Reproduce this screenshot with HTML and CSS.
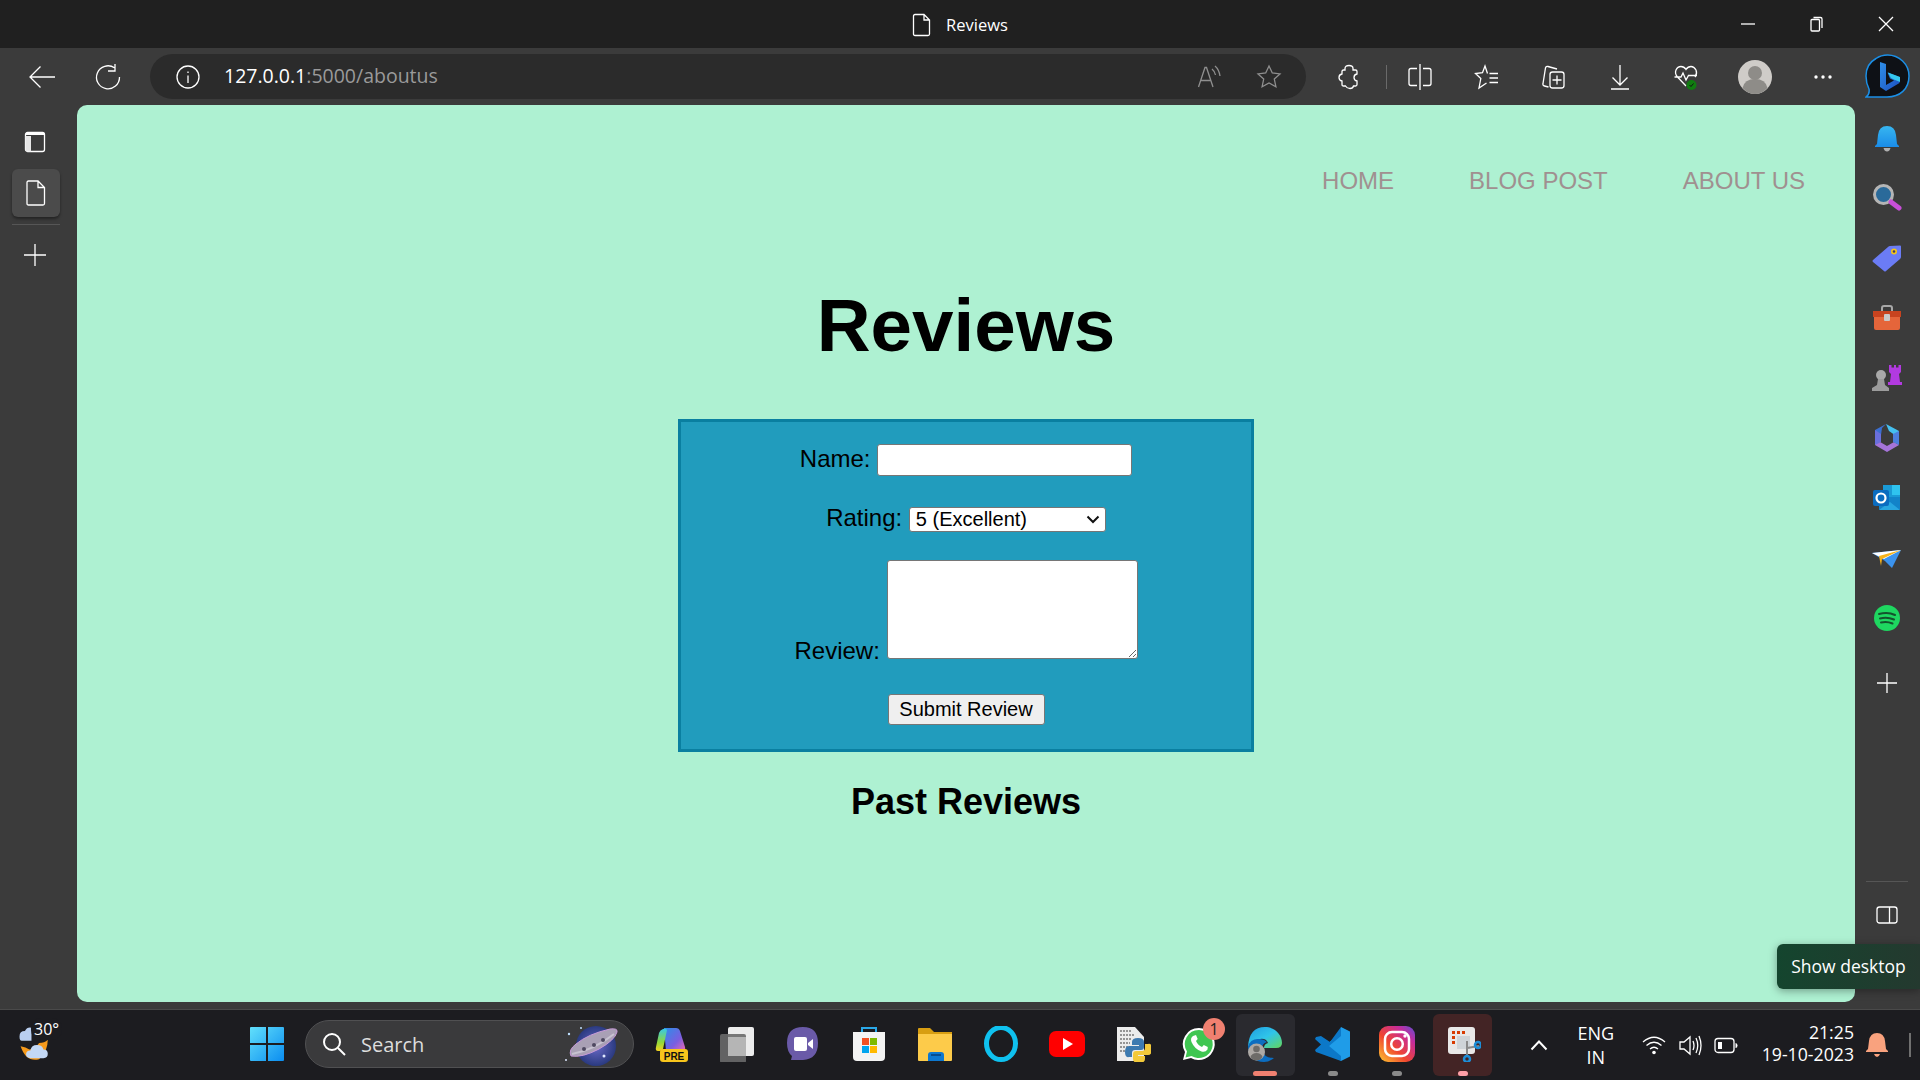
FILE: index.html
```html
<!DOCTYPE html>
<html>
  <head>
    <meta charset="utf-8">
    <title>Reviews</title>
    <link rel="stylesheet" href="styles.css">
  </head>
  <body>
    <div class="titlebar">
      <div class="tabtitle">
        <svg class="ico20" viewBox="0 0 20 24"><path class="ln" d="M3 1.500h9l5.500 5.500v14q0 1.500-1.500 1.500H3q-1.500 0-1.500-1.500v-18Q1.500 1.500 3 1.500zM12 1.500v5.500h5.500"/></svg>
        <span>Reviews</span>
      </div>
      <div class="winbtns">
        <svg class="winbtn" viewBox="0 0 16 16"><path class="ln" d="M1 8h14"/></svg>
        <svg class="winbtn" viewBox="0 0 16 16"><path class="ln" d="M2 4.500q0-1 1-1h6.500q1 0 1 1v9.500q0 1-1 1H3q-1 0-1-1zM4.500 1.500h7q1.500 0 1.500 1.500v9"/></svg>
        <svg class="winbtn" viewBox="0 0 16 16"><path class="ln" d="M1 1l14 14M15 1L1 15"/></svg>
      </div>
    </div>

    <div class="toolbar">
      <div class="tool"><svg class="ico28" viewBox="0 0 28 28"><path class="ln" d="M27 14H2M12.500 3.500L2 14l10.500 10.500"/></svg></div>
      <div class="tool"><svg class="ico28" viewBox="0 0 28 28"><path class="ln" d="M20.500 4.800A11.500 11.500 0 1 0 25.500 14M21 1v7h-7"/></svg></div>
      <div class="addressbar">
        <svg class="ico24" viewBox="0 0 24 24"><circle class="ln" cx="12" cy="12" r="11"/><path class="ln" d="M12 10.500v7.500M12 6.500v1.500"/></svg>
        <div class="url"><span class="host">127.0.0.1</span>:5000/aboutus</div>
        <div class="addr-right">
          <svg class="ico26 dim" viewBox="0 0 26 26"><path class="ln" d="M1.500 23L8 3.500h1.500L16 23M4 16.500h10M15 5q3 2.500 3.500 6M18 2q4 3.500 5 10"/></svg>
          <svg class="ico26 dim" viewBox="0 0 26 26"><path class="ln" d="M13 2l3.300 7 7.700.9-5.700 5.200 1.600 7.600L13 18.900l-6.900 3.800 1.600-7.600L2 9.900 9.700 9z"/></svg>
        </div>
      </div>
      <div class="tool tool-ext"><svg class="ico26" viewBox="0 0 26 26"><path class="ln" d="M9 4.500Q9 1.500 13 1.500t4 3V6h2.500q1.500 0 1.500 1.500V10q-3 .5-3 3.500t3 3.500v3.500q0 1.500-1.500 1.500h-2q-.5 2.500-3.500 2.500T9.500 22h-2Q6 22 6 20.500V17q-3-.5-3-3.500T6 10V7.500Q6 6 7.500 6H9z"/></svg></div>
      <div class="divider"></div>
      <div class="tool tool-r"><svg class="ico26" viewBox="0 0 26 26"><path class="ln" d="M13 0v26M10 4.500H4Q2 4.500 2 6.500v13q0 2 2 2h6M16 4.500h6q2 0 2 2v13q0 2-2 2h-6"/></svg></div>
      <div class="tool tool-r"><svg class="ico26" viewBox="0 0 26 26"><path class="ln" d="M13.500 9.500L11 2 8.500 8.700 1.500 9.500l5.300 5L5 24l7.500-5M15.500 9.500h8.500M15.500 14h8.500M15.500 18.500h8.500"/></svg></div>
      <div class="tool tool-r"><svg class="ico26" viewBox="0 0 26 26"><path class="ln" d="M8.500 23L4.500 22Q2.500 21.500 3 19.500L5.500 4Q6 2 8 2.500l9 2.500M10 10.500q0-2.500 2.500-2.500h9q2.500 0 2.500 2.500v11q0 2.500-2.500 2.500h-9Q10 24 10 21.500zM17 11.500v9M12.500 16h9"/></svg></div>
      <div class="tool tool-r"><svg class="ico26" viewBox="0 0 26 26"><path class="ln" d="M13 1v20M5.500 13.500L13 21l7.500-7.500M4 25h18"/></svg></div>
      <div class="tool tool-r"><svg class="ico26" viewBox="0 0 26 26"><path class="ln" d="M13 22L4.500 13Q1.500 9.500 3 6t5-3.500q3 0 5 3 2-3 5-3t5 3.500q1.500 3.500-1 7M1.500 13H8l2-4 3 7 2.500-4.500H24"/><circle cx="18.500" cy="21" r="5" fill="#107c10"/><path d="M16.500 21l1.500 1.500 2.500-3" fill="none" stroke="#111" stroke-width="1"/></svg></div>
      <div class="tool tool-r tool-push">
        <svg class="ico34" viewBox="0 0 34 34"><circle cx="17" cy="17" r="17" fill="#cfccc8"/><circle cx="17" cy="13" r="7" fill="#8e8c88"/><path d="M4.500 28q2-9 12.500-9t12.500 9Q24 34 17 34T4.500 28z" fill="#8e8c88"/></svg>
      </div>
      <div class="tool tool-r tool-push"><svg class="ico26" viewBox="0 0 26 26"><circle cx="6" cy="13" r="1.700" fill="#fff"/><circle cx="13" cy="13" r="1.700" fill="#fff"/><circle cx="20" cy="13" r="1.700" fill="#fff"/></svg></div>
      <svg class="bing" viewBox="0 0 45 45">
        <defs><linearGradient id="bingb" x1="0" y1="0" x2="1" y2="1"><stop offset="0" stop-color="#2f8fe8"/><stop offset="1" stop-color="#1c4fc0"/></linearGradient></defs>
        <path d="M22.500 1C34 1 44 10 44 22c0 13-9 21-22 21H1q4-3 3-8Q1 29 1 22 1 10 11 4.500 16 1 22.500 1z" fill="#0e1116" stroke="#1b8fe6" stroke-width="1.500"/>
        <path d="M15 8l6 2v21l8-4.500-4-2-2.500-6 12 4.500v6l-13.500 8-6-4z" fill="url(#bingb)"/>
        <path d="M23 18.500l12 4.500v5l-6-2.500-3-1.500z" fill="#35c8ee"/>
      </svg>
    </div>

    <div class="main">
      <div class="leftrail">
        <div class="railicon"><svg class="ico24" viewBox="0 0 24 24"><rect class="ln" x="2.500" y="2.500" width="19" height="19" rx="2"/><path d="M2.500 4.500q0-2 2-2h15q2 0 2 2V5h-19z" fill="#fff"/><path d="M2.500 6h5.500v15.500H4.500q-2 0-2-2z" fill="#e6e6e6"/></svg></div>
        <div class="activetab"><svg class="ico28" viewBox="0 0 28 28"><path class="ln" d="M6.500 2h9.500l6.500 6.500v16q0 1.500-1.500 1.500H6.500Q5 26 5 24.500v-21Q5 2 6.500 2zM16 2v6.500h6.500"/></svg></div>
        <div class="railsep"></div>
        <div class="railicon"><svg class="ico24" viewBox="0 0 24 24"><path class="ln" d="M12 1v22M1 12h22"/></svg></div>
      </div>

      <div class="page">
        <nav class="nav">
          <a>HOME</a>
          <a>BLOG POST</a>
          <a>ABOUT US</a>
        </nav>
        <h1>Reviews</h1>
        <form class="reviewform">
          <div class="row row-name">
            <label>Name:</label>
            <input type="text">
          </div>
          <div class="row row-rating">
            <label>Rating:</label>
            <span class="selectwrap">
              <select>
                <option>5 (Excellent)</option>
              </select>
              <svg class="selectarrow" viewBox="0 0 14 9"><path d="M1.500 1.500L7 7l5.500-5.500" fill="none" stroke="#111" stroke-width="2"/></svg>
            </span>
          </div>
          <div class="row row-review">
            <label>Review:</label>
            <textarea></textarea>
          </div>
          <button type="button">Submit Review</button>
        </form>
        <h2>Past Reviews</h2>
      </div>

      <div class="rightrail">
        <div class="sideicons">
          <svg class="ico32" viewBox="0 0 32 32"><defs><linearGradient id="bell" x1="0" y1="0" x2="0" y2="1"><stop offset="0" stop-color="#37b6f0"/><stop offset="1" stop-color="#1a8ce8"/></linearGradient></defs><path d="M16 4q8 0 9 9l1 9 2 2v1H4v-1l2-2 1-9q1-9 9-9z" fill="url(#bell)"/><path d="M12.500 26h7q-1 3.500-3.500 3.500T12.500 26z" fill="#b0b0b0"/></svg>
          <svg class="ico32" viewBox="0 0 32 32"><circle cx="12.500" cy="12.500" r="9" fill="#2a6a9a" stroke="#b5b5b5" stroke-width="3"/><path d="M20 20l8 6" stroke="#c94fd8" stroke-width="5" stroke-linecap="round"/></svg>
          <svg class="ico32" viewBox="0 0 32 32"><path d="M2 18L17 5q1-1 2-1l10-.5q1 0 1 1V15q0 1-1 2L15 29q-1 1-2 0L2 20q-1-1 0-2z" fill="#6b7cf5"/><circle cx="23" cy="9.500" r="3" fill="#f5c518"/><circle cx="23" cy="9.500" r="1.300" fill="#3d3d6b"/></svg>
          <svg class="ico32" viewBox="0 0 32 32"><path d="M11 9V6q0-2 2-2h6q2 0 2 2v3" fill="none" stroke="#a8a8a8" stroke-width="2"/><path d="M2 9h28v6H2z" fill="#c8431f"/><path d="M3 15h26v11q0 2-2 2H5q-2 0-2-2z" fill="#e5653a"/><rect x="13" y="12" width="6" height="7" rx="1" fill="#c9c9c9"/></svg>
          <svg class="ico32" viewBox="0 0 32 32"><circle cx="10" cy="13" r="5" fill="#a9a9a9"/><path d="M7 17h6l1 6 4 3v3H1v-3l5-3z" fill="#9c9c9c"/><path d="M18 3h2.500v2.500H23V3h2v2.500h2.500V3H30v7l-2 2 1 8h2v3H17v-3h2l1-8-2-2z" fill="#b23ae0"/></svg>
          <svg class="ico32" viewBox="0 0 32 32"><path d="M15 2L4 8v9l6-4 1-7z" fill="#3b6fd1"/><path d="M15 2l13 7v7l-10-7z" fill="#45c0ef"/><path d="M4 17v6l12 7 12-7-5-3-7 4z" fill="#a574d8"/><path d="M4 8l6 4v8l-6 3z" fill="#6a6fdc"/><path d="M28 9v14l-6-3v-8z" fill="#4d7fdd"/></svg>
          <svg class="ico32" viewBox="0 0 32 32"><path d="M12 3h17v13l-9 2-8-2z" fill="#1a9ad6"/><path d="M21 3h8v10h-8z" fill="#2fc3ef"/><path d="M8 15l21 0v12q0 1-1 1H9q-1 0-1-1z" fill="#1283c9"/><path d="M8 28l11-8 10 8z" fill="#27a6e0"/><rect x="2" y="8" width="16" height="16" rx="2" fill="#0a6cc0"/><circle cx="10" cy="16" r="4.500" fill="none" stroke="#fff" stroke-width="2.200"/></svg>
          <svg class="ico32" viewBox="0 0 32 32"><path d="M1 11l29-3-9 18-7-7z" fill="#3b93ee"/><path d="M1 11l29-3-17 9z" fill="#fff"/><path d="M8 14l22-6-19 9-1 7z" fill="#f6b21a"/></svg>
          <svg class="ico32" viewBox="0 0 32 32"><circle cx="16" cy="16" r="13" fill="#1ed760"/><path d="M8 12q9-2.500 16 1M9 16.500q7-2 14 1M10 20.500q6-1.500 11.500 1" fill="none" stroke="#14532d" stroke-width="2" stroke-linecap="round"/></svg>
          <svg class="ico24 sideplus" viewBox="0 0 24 24"><path class="ln" d="M12 2v20M2 12h20"/></svg>
        </div>
        <div class="railfoot">
          <div class="railsep2"></div>
          <svg class="ico24" viewBox="0 0 24 24"><rect class="ln" x="2" y="4" width="20" height="16" rx="2.500"/><path class="ln" d="M14.500 4v16"/></svg>
        </div>
      </div>
    </div>

    <div class="taskbar">
      <div class="weather">
        <svg class="weather-ico" viewBox="0 0 46 46">
          <path d="M6 16q0-5 5-5 2-4 6-3v12H8q-2 0-2-4z" fill="#b9cff0"/>
          <path d="M7 25q5 1 8 3 5 0 9-6 5 0 8-3 0 11-8 18-12 3-17-12z" fill="#f59a1c"/>
          <path d="M16 36q-4 0-4-3.500t4-3.500q1-5 6-5t6 4q4 0 4 4t-4 4z" fill="#c3d8f5"/>
        </svg>
        <span class="temp">30°</span>
      </div>
      <div class="taskitems">
        <div class="taskitem">
          <svg class="ico36" viewBox="0 0 36 36">
            <defs><linearGradient id="win" x1="0" y1="0" x2="1" y2="1"><stop offset="0" stop-color="#62e0fb"/><stop offset="1" stop-color="#0b8df0"/></linearGradient></defs>
            <path d="M1 2q0-1 1-1h15v16H1zM19 1h15q1 0 1 1v15H19zM1 19h16v16H2q-1 0-1-1zM19 19h16v15q0 1-1 1H19z" fill="url(#win)"/>
          </svg>
        </div>
        <div class="searchbox">
          <svg class="ico24" viewBox="0 0 24 24"><circle class="ln ln-2" cx="10" cy="10" r="8"/><path class="ln ln-2" d="M16 16l7 7"/></svg>
          <span>Search</span>
          <svg class="searchart" viewBox="0 0 66 44">
            <defs><radialGradient id="sky"><stop offset="0" stop-color="#6a6ac8"/><stop offset="1" stop-color="#2a3a80"/></radialGradient></defs>
            <circle cx="36" cy="24" r="20" fill="url(#sky)"/>
            <path d="M11 34q-3-6 5-12Q28 12 50 7q8-1 7 3-2 8-18 17-17 9-28 7z" fill="#a9a0b5" stroke="#c89ad8"/>
            <path d="M12 32q22-4 42-20" fill="none" stroke="#c7c2d0" stroke-width="2"/>
            <circle cx="24" cy="27" r="2" fill="#4e4860"/><circle cx="34" cy="23" r="2" fill="#4e4860"/><circle cx="43" cy="18" r="2" fill="#4e4860"/>
            <circle cx="9" cy="12" r="1.200" fill="#bfe0ff"/><circle cx="44" cy="34" r="1.500" fill="#dfe8ff"/><circle cx="21" cy="6" r="1" fill="#bfe0ff"/><circle cx="6" cy="38" r="1" fill="#dfe8ff"/>
          </svg>
        </div>
        <div class="taskitem"><svg class="ico36" viewBox="0 0 36 36">
          <defs>
            <linearGradient id="cop" x1="0" y1="0" x2="1" y2="1"><stop offset="0" stop-color="#2a8fe8"/><stop offset=".6" stop-color="#7a5ee0"/><stop offset="1" stop-color="#ee6ab0"/></linearGradient>
            <linearGradient id="cop2" x1="0" y1="0" x2="0" y2="1"><stop offset="0" stop-color="#36c8e8"/><stop offset=".6" stop-color="#8fd83c"/><stop offset="1" stop-color="#f4d21f"/></linearGradient>
          </defs>
          <path d="M11 2h12q3 0 4 3l5 16q1 4-3 4H13z" fill="url(#cop)"/>
          <path d="M10 3q3-1 4 1l-4 19q-1 2-5 2-3 0-2-4L6 7q1-3 4-4z" fill="url(#cop2)"/>
          <rect x="7" y="23" width="28" height="13" rx="3" fill="#f8c51c"/><text x="21" y="33.500" class="pre">PRE</text>
        </svg></div>
        <div class="taskitem"><svg class="ico36" viewBox="0 0 36 36"><rect x="9" y="1" width="26" height="29" rx="2" fill="#ececec"/><rect x="1" y="11" width="26" height="29" rx="2" fill="#6a6a6a" opacity=".9" transform="translate(0 -3)"/><rect x="9" y="11" width="18" height="19" fill="#b5b5b5"/></svg></div>
        <div class="taskitem"><svg class="ico36" viewBox="0 0 36 36"><path d="M18 1q15 0 15 16t-15 17H6l1-4Q2 26 2 17 2 1 18 1z" fill="#6a5aa8"/><rect x="9" y="11" width="13" height="14" rx="2" fill="#fff"/><path d="M23 17l5-4v10l-5-4z" fill="#fff"/></svg></div>
        <div class="taskitem"><svg class="ico36" viewBox="0 0 36 36"><path d="M11 7V2h14v5" fill="none" stroke="#2aa8e8" stroke-width="2"/><path d="M2 6h32v25q0 4-4 4H6q-4 0-4-4z" fill="#f3f3f3"/><path d="M11 12h7v7h-7z" fill="#f25022"/><path d="M19 12h7v7h-7z" fill="#7fba00"/><path d="M11 20h7v7h-7z" fill="#00a4ef"/><path d="M19 20h7v7h-7z" fill="#ffb900"/></svg></div>
        <div class="taskitem"><svg class="ico36" viewBox="0 0 36 36"><path d="M1 3q0-1 1-1h11l4 4h18v28H1z" fill="#d89e12"/><path d="M1 8h34v26q0 1-1 1H2q-1 0-1-1z" fill="#fdcb4a"/><path d="M11 35v-6q0-3 3-3h10q3 0 3 3v6z" fill="#0d78d0"/><path d="M14 29h10" stroke="#063f78" stroke-width="1.500"/></svg></div>
        <div class="taskitem"><svg class="ico36" viewBox="0 0 36 36"><ellipse cx="18" cy="17.500" rx="14.500" ry="16" fill="none" stroke="#0fc1ef" stroke-width="5"/><path d="M14 32l5 4 1-5z" fill="#0fc1ef"/></svg></div>
        <div class="taskitem"><svg class="ico36" viewBox="0 0 36 36"><rect x="0" y="5" width="36" height="26" rx="7" fill="#f00"/><path d="M14 12l10 6-10 6z" fill="#fff"/></svg></div>
        <div class="taskitem"><svg class="ico36" viewBox="0 0 36 36"><path d="M2 1h18l9 10v24H2z" fill="#ececec"/><path d="M5 5h12M5 9h14M5 13h12M5 17h10M5 21h9M5 25h8" stroke="#777" stroke-width="1.500" stroke-dasharray="2 1"/><path d="M23 12q-6 0-6 4v3h7v1h-10q-4 0-4 6t4 5h3v-4q0-3 3-3h6q3 0 3-3v-5q0-4-6-4z" fill="#3d7ab0"/><path d="M24 37q6 0 6-4v-3h-7v-1h10q4 0 4-6t-4-5h-3v4q0 3-3 3h-6q-3 0-3 3v5q0 4 6 4z" fill="#f2c93a"/></svg></div>
        <div class="taskitem"><svg class="ico36 icoover" viewBox="0 0 36 36"><path d="M18 2a16 16 0 0 0-14 24L2 34l8-2A16 16 0 1 0 18 2z" fill="#fff"/><path d="M18 4a14 14 0 0 0-12 21.500L4.500 31.500l6-1.500A14 14 0 1 0 18 4z" fill="#3fc651"/><path d="M12 10q-3 2-1.500 6 3 7 10 9.500 4 1 6-2l.3-2.500-4-2-1.800 2q-4-1.500-6-6l1.700-2-1.700-4z" fill="#fff"/></svg><span class="badge">1</span></div>
        <div class="taskitem taskitem-active">
          <svg class="ico36" viewBox="0 0 36 36">
            <defs><linearGradient id="edge" x1="0" y1="0" x2="1" y2="1"><stop offset="0" stop-color="#1f9be0"/><stop offset=".5" stop-color="#2fc5ea"/><stop offset="1" stop-color="#63d65b"/></linearGradient></defs>
            <path d="M18 1C28 1 35 9 35 17q0 5-6 5H17q0-4 4-5-2-5-8-4-9 1-12 8Q2 1 18 1z" fill="url(#edge)"/>
            <path d="M1 21q2-9 12-8 4 0 7 3-6 2-5 8 2 8 12 8-5 4-10 4Q3 36 1 21z" fill="#0c6dc0"/>
            <circle cx="9.500" cy="26" r="8.500" fill="#ada9a5"/><circle cx="9.500" cy="23" r="3.300" fill="#6e6c69"/><path d="M3.500 31q1.500-4 6-4t6 4q-2.500 3.500-6 3.500t-6-3.500z" fill="#6e6c69"/>
          </svg>
          <i class="pill pill-red"></i>
        </div>
        <div class="taskitem taskitem-code"><svg class="ico36" viewBox="0 0 36 36"><path d="M26 1l9 4.500v25L26 35 10 20l16-14z" fill="#1f9ce8"/><path d="M26 1v9L14 20l12 10v5L1 26l-1-2 6-5.500L0 13l1-2 5-1 9 6z" fill="#0c78c8"/></svg><i class="pill pill-grey"></i></div>
        <div class="taskitem"><svg class="ico36" viewBox="0 0 36 36"><defs><linearGradient id="ig" x1="0" y1="1" x2="1" y2="0"><stop offset="0" stop-color="#fdc830"/><stop offset=".4" stop-color="#f0462f"/><stop offset=".75" stop-color="#c72c9a"/><stop offset="1" stop-color="#5a4fd8"/></linearGradient></defs><rect width="36" height="36" rx="9" fill="url(#ig)"/><rect x="6" y="6" width="24" height="24" rx="7" fill="none" stroke="#fff" stroke-width="2.500"/><circle cx="18" cy="18" r="5.800" fill="none" stroke="#fff" stroke-width="2.500"/><circle cx="26" cy="10" r="1.700" fill="#fff"/></svg><i class="pill pill-grey"></i></div>
        <div class="taskitem taskitem-snip"><svg class="ico36" viewBox="0 0 36 36"><rect x="3" y="1" width="27" height="27" rx="3" fill="#e8e8e8"/><path d="M7 5h3v3H7zM12 5h3v3h-3zM17 5h3v3h-3zM7 10h3v3H7zM7 15h3v3H7z" fill="#d83b01"/><path d="M12 10h13v13H12z" fill="#cfd4d8"/><path d="M22 15v15M22 22l12-2" stroke="#8a8a8a" stroke-width="2"/><circle cx="22" cy="33" r="3" fill="none" stroke="#1c8ed8" stroke-width="2.500"/><circle cx="33" cy="19" r="3" fill="none" stroke="#1c8ed8" stroke-width="2.500"/></svg><i class="pill pill-pink"></i></div>
      </div>
      <div class="tray">
        <svg class="tray-chev" viewBox="0 0 18 12"><path class="ln ln-2" d="M1.500 10.500L9 2.500l7.500 8"/></svg>
        <div class="lang"><span>ENG</span><span>IN</span></div>
        <svg class="ico24" viewBox="0 0 24 24"><path class="ln" d="M1 9q11-9.500 22 0M4.500 12.500q7.500-6.500 15 0M8 16q4-3.500 8 0"/><circle cx="12" cy="19.500" r="1.800" fill="#fff"/></svg>
        <svg class="ico24" viewBox="0 0 24 24"><path class="ln" d="M2 9h4l6-5v17l-6-5H2zM15 8q2 4.500 0 9M18 5q3.500 7.500 0 15M21 3q4 9.500 0 19"/></svg>
        <svg class="ico24" viewBox="0 0 24 24"><rect class="ln" x="1" y="5.500" width="19" height="14" rx="3"/><path d="M4 9h4v7H4z" fill="#fff"/><path d="M21.500 10v5q2 0 2-2.500t-2-2.500z" fill="#fff"/></svg>
        <div class="clock"><span>21:25</span><span>19-10-2023</span></div>
        <svg class="ico24 traybell" viewBox="0 0 24 28"><path d="M12 2q7 0 8 8l1 8 2 2v1H1v-1l2-2 1-8q1-8 8-8z" fill="#f9a27e"/><path d="M9 23h6q-1 3-3 3t-3-3z" fill="#f9a27e"/></svg>
        <div class="showline"></div>
      </div>
    </div>

    <div class="tooltip">Show desktop</div>
  </body>
</html>
```

FILE: styles.css
```css
html, body {
  margin: 0;
  padding: 0;
  width: 1920px;
  height: 1080px;
  overflow: hidden;
}

body {
  position: relative;
  display: flex;
  flex-direction: column;
  background: #3b3b3b;
  font-family: "Open Sans", "Noto Sans", sans-serif;
  color: #fff;
}

svg {
  display: block;
  flex: none;
}

.ln {
  fill: none;
  stroke: #fff;
  stroke-width: 1.3;
}
.ln-2 {
  stroke-width: 2;
}
.dim .ln {
  stroke: #8f8f8f;
}

.ico20 { width: 20px; height: 24px; }
.ico24 { width: 24px; height: 24px; }
.ico26 { width: 26px; height: 26px; }
.ico28 { width: 28px; height: 28px; }
.ico32 { width: 32px; height: 32px; }
.ico34 { width: 34px; height: 40px; }
.ico36 { width: 36px; height: 36px; }

/* title bar */
.titlebar {
  height: 48px;
  background: #202020;
  display: flex;
  align-items: center;
  justify-content: center;
  position: relative;
}
.tabtitle {
  display: flex;
  align-items: center;
  gap: 14px;
  font-size: 16.500px;
  padding-top: 1px;
}
.winbtns {
  position: absolute;
  right: 0;
  top: 0;
  height: 48px;
  display: flex;
  align-items: center;
  gap: 53px;
  padding-right: 26px;
}
.winbtn {
  width: 16px;
  height: 16px;
}

/* toolbar */
.toolbar {
  height: 57px;
  display: flex;
  align-items: center;
  padding-left: 9px;
}
.tool {
  width: 66px;
  display: flex;
  justify-content: center;
}
.tool-r {
  width: 66.500px;
}
.tool-push {
  margin-left: 2px;
}
.tool-ext {
  margin-left: 10px;
}
.divider {
  width: 1px;
  height: 24px;
  background: #6a6a6a;
  margin-left: 4px;
}
.addressbar {
  width: 1156px;
  height: 45px;
  margin-left: 9px;
  border-radius: 23px;
  background: #2b2b2b;
  display: flex;
  align-items: center;
  padding-left: 26px;
  padding-right: 16px;
  box-sizing: border-box;
}
.url {
  margin-left: 24px;
  padding-bottom: 2px;
  font-size: 19.500px;
  color: #9a9a9a;
}
.host {
  color: #fff;
}
.addr-right {
  margin-left: auto;
  display: flex;
  gap: 33px;
  padding-right: 8px;
}
.bing {
  width: 45px;
  height: 45px;
  margin-left: 8.500px;
}

/* middle */
.main {
  height: 904px;
  display: flex;
}
.leftrail {
  width: 77px;
  display: flex;
  flex-direction: column;
  align-items: center;
  padding-top: 25px;
  box-sizing: border-box;
}
.railicon {
  width: 48px;
  display: flex;
  justify-content: center;
  margin-left: -7px;
}
.activetab {
  width: 48px;
  height: 48px;
  margin: 15px 0 0 -5px;
  border-radius: 6px;
  background: #4b4b4b;
  box-shadow: 0 2px 3px rgba(0, 0, 0, .4);
  display: flex;
  align-items: center;
  justify-content: center;
}
.railsep {
  width: 48px;
  height: 1px;
  background: #565656;
  margin: 7px 0 18px -5px;
}
.page {
  width: 1778px;
  height: 897px;
  background: #aef1d2;
  border-radius: 10px;
  color: #000;
  font-family: "Liberation Sans", Arial, sans-serif;
  text-align: center;
}
.rightrail {
  width: 65px;
  display: flex;
  flex-direction: column;
  align-items: center;
  justify-content: space-between;
  box-sizing: border-box;
  padding: 17px 2px 0 0;
}
.sideicons {
  display: flex;
  flex-direction: column;
  align-items: center;
  gap: 28px;
}
.sideplus {
  margin-top: 9px;
}
.railfoot {
  display: flex;
  flex-direction: column;
  align-items: center;
  padding-bottom: 82px;
}
.railsep2 {
  width: 42px;
  height: 1px;
  background: #565656;
  margin-bottom: 21px;
}

/* page content */
.nav {
  display: flex;
  justify-content: flex-end;
  gap: 75px;
  padding: 62px 50px 0 0;
  font-size: 24px;
  line-height: 28px;
  color: #a09090;
}
h1 {
  margin: 88px 0 0;
  font-size: 74.600px;
  line-height: 85px;
  font-weight: 700;
}
.reviewform {
  width: 576px;
  height: 333px;
  margin: 51px auto 0;
  box-sizing: border-box;
  border: 3px solid #0a7fa0;
  background: #219cbd;
  padding-top: 22px;
  font-size: 24px;
}
.row-rating {
  margin-top: 28px;
}
.row-review {
  margin-top: 28px;
  margin-bottom: 29px;
}
input, select, textarea, button {
  box-sizing: border-box;
  font-family: "Liberation Sans", Arial, sans-serif;
  font-size: 20px;
  margin: 0;
  border: 1px solid #767676;
  border-radius: 3px;
  background: #fff;
}
input {
  width: 255px;
  height: 32px;
}
.selectwrap {
  position: relative;
  display: inline-block;
}
select {
  appearance: none;
  display: block;
  width: 197px;
  height: 25px;
  padding: 0 0 0 6px;
  color: #000;
}
.selectarrow {
  position: absolute;
  right: 6px;
  top: 8px;
  width: 14px;
  height: 9px;
}
textarea {
  width: 251px;
  height: 99px;
}
button {
  display: block;
  width: 157px;
  height: 31px;
  margin: 0 auto;
  padding: 0;
  background: #efefef;
  color: #000;
}
h2 {
  margin: 29px 0 0;
  font-size: 36px;
  line-height: 42px;
  font-weight: 700;
}

/* taskbar */
.taskbar {
  height: 71px;
  background: #1c1c20;
  border-top: 1px solid #4a4a4a;
  box-sizing: border-box;
  display: flex;
  align-items: center;
  position: relative;
}
.weather {
  position: absolute;
  left: 13px;
  top: 9px;
  width: 50px;
  height: 50px;
}
.weather-ico {
  width: 50px;
  height: 50px;
}
.temp {
  position: absolute;
  left: 18px;
  top: -1px;
  padding: 0 3px;
  background: #1c1c20;
  border-radius: 10px;
  font-size: 16px;
  line-height: 22px;
}
.taskitems {
  display: flex;
  align-items: center;
  margin-left: 234px;
}
.taskitem {
  position: relative;
  width: 66px;
  height: 62px;
  box-sizing: border-box;
  padding-bottom: 2px;
  display: flex;
  align-items: center;
  justify-content: center;
}
.taskitem-active {
  background: #2a2a2f;
  border-radius: 6px;
  margin: 0 3.500px;
  width: 59px;
}
.taskitem-code {
  margin-left: 2px;
  margin-right: -2px;
}
.taskitem-snip {
  background: #432425;
  border-radius: 6px;
  margin-left: 3px;
  width: 59px;
}
.icoover {
  overflow: visible;
}
.pre {
  font-family: "Liberation Sans", sans-serif;
  font-size: 10px;
  font-weight: 700;
  text-anchor: middle;
  fill: #111;
}
.badge {
  position: absolute;
  left: 37px;
  top: 4px;
  width: 22px;
  height: 22px;
  border-radius: 50%;
  background: #f08070;
  color: #222;
  font-size: 16px;
  line-height: 22px;
  text-align: center;
}
.pill {
  position: absolute;
  bottom: 0;
  left: 50%;
  height: 5px;
  border-radius: 3px;
  transform: translateX(-50%);
}
.pill-red { width: 24px; background: #f08070; }
.pill-grey { width: 10px; background: #8a8a8a; }
.pill-pink { width: 10px; background: #ffa0a8; }
.searchbox {
  width: 329px;
  height: 48px;
  box-sizing: border-box;
  margin: 0 4px 2px 5px;
  border: 1px solid #505052;
  border-radius: 24px;
  background: #3a3a3c;
  display: flex;
  align-items: center;
  padding-left: 16px;
  font-size: 20px;
  color: #dddddd;
}
.searchbox span {
  margin-left: 15px;
}
.searchart {
  width: 66px;
  height: 44px;
  margin-left: auto;
  margin-right: 7px;
}
.tray {
  position: absolute;
  right: 0;
  top: 0;
  height: 70px;
  display: flex;
  align-items: center;
  gap: 12px;
}
.tray-chev {
  width: 18px;
  height: 12px;
  margin-right: 11px;
}
.lang {
  display: flex;
  flex-direction: column;
  align-items: center;
  width: 50px;
  margin-right: 9px;
  font-size: 18px;
  line-height: 24px;
}
.clock {
  display: flex;
  flex-direction: column;
  align-items: flex-end;
  margin-left: 12px;
  padding-bottom: 5px;
  font-size: 17.700px;
  line-height: 22px;
}
.traybell {
  height: 28px;
  margin-left: -1px;
}
.showline {
  width: 2px;
  height: 24px;
  background: #707070;
  margin: 0 9px 0 8px;
}
.tooltip {
  position: absolute;
  right: 0;
  top: 944px;
  width: 143px;
  height: 45px;
  box-sizing: border-box;
  background: linear-gradient(90deg, #14452e, #24392f);
  border-radius: 6px 0 0 6px;
  box-shadow: 0 2px 8px rgba(0, 0, 0, .35);
  font-size: 17.500px;
  line-height: 45px;
  text-align: center;
}
```
